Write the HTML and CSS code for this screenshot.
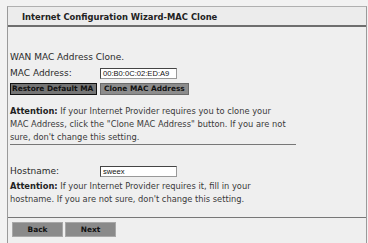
FILE: index.html
```html
<!DOCTYPE html>
<html>
<head>
<meta charset="utf-8">
<link rel="stylesheet" href="styles.css">
</head>
<body>
<div class="panel">
  <div class="header">Internet Configuration Wizard-MAC Clone</div>
  <div class="content">
    <div class="title">WAN MAC Address Clone.</div>
    <div class="row">
      <span class="label">MAC Address:</span>
      <span class="field">00:B0:0C:02:ED:A9</span>
    </div>
    <div class="btnrow">
      <span class="btn dark">Restore Default MA</span>
      <span class="btn">Clone MAC Address</span>
    </div>
    <p class="note"><span class="strong">Attention:</span> If your Internet Provider requires you to clone your MAC Address, click the "Clone MAC Address" button. If you are not sure, don't change this setting.</p>
    <div class="sep short"></div>
    <div class="row host">
      <span class="label">Hostname:</span>
      <span class="field">sweex</span>
    </div>
    <p class="note second"><span class="strong">Attention:</span> If your Internet Provider requires it, fill in your hostname. If you are not sure, don't change this setting.</p>
  </div>
  <div class="sep full"></div>
  <div class="nav">
    <span class="navbtn">Back</span>
    <span class="navbtn">Next</span>
  </div>
</div>
</body>
</html>
```
FILE: styles.css
```css
html, body {
  margin: 0;
  padding: 0;
  background: #f2f2f2;
}
body {
  width: 368px;
  height: 243px;
  overflow: hidden;
  font-family: "DejaVu Sans", Verdana, sans-serif;
  color: #222;
}
.panel {
  margin: 6px 1px 0 7px;
  border-left: 1px solid #9a9a9a;
  border-right: 1px solid #9a9a9a;
  border-top: 1px solid #b0b0b0;
  height: 236px;
  background: #efefef;
}
.header {
  height: 18px;
  border-bottom: 2px solid #6e6e6e;
  font-weight: bold;
  font-size: 8.4px;
  line-height: 20px;
  padding-left: 14px;
  color: #222;
  background: #ececec;
}
.content {
  padding: 0 0 0 2px;
}
.title {
  margin-top: 24px;
  font-size: 9px;
  line-height: 13px;
  color: #2a2a2a;
}
.row {
  display: flex;
  align-items: center;
  height: 12px;
  margin-top: 3px;
}
.label {
  font-size: 9px;
  width: 90px;
  color: #2a2a2a;
}
.field {
  box-sizing: border-box;
  width: 77px;
  height: 11px;
  border: 1px solid #444;
  border-right-color: #999;
  border-bottom-color: #999;
  background: #fff;
  font-family: "Liberation Sans", Arial, sans-serif;
  font-size: 7.6px;
  line-height: 9px;
  padding-left: 2px;
  color: #111;
  white-space: nowrap;
  overflow: hidden;
}
.btnrow {
  display: flex;
  gap: 3px;
  margin-top: 4px;
  height: 12px;
}
.btn {
  box-sizing: border-box;
  height: 12px;
  background: #8c8c8c;
  border: 1px solid #6a6a6a;
  font-family: "DejaVu Sans", Verdana, sans-serif;
  font-weight: bold;
  font-size: 7.4px;
  line-height: 10px;
  padding: 0 3px;
  color: #111;
  white-space: nowrap;
}
.btn.dark {
  width: 87px;
  background: #747474;
  border: 1px solid #111;
  padding: 0 1px;
}
.note {
  margin: 10px 0 0 0;
  width: 280px;
  font-size: 8.3px;
  line-height: 13px;
  color: #3a3a3a;
}
.strong {
  font-weight: bold;
  color: #222;
}
.note.second {
  margin-top: 3px;
}
.sep {
  height: 1px;
  background: #777;
}
.sep.short {
  width: 286px;
  margin-top: 0;
}
.host {
  margin-top: 20px;
}
.sep.full {
  margin-top: 11px;
}
.nav {
  display: flex;
  gap: 2px;
  padding: 4px 0 0 4px;
}
.navbtn {
  box-sizing: border-box;
  width: 51px;
  height: 15px;
  background: #8a8a8a;
  border: 1px solid #a8a8a8;
  text-align: center;
  font-family: "DejaVu Sans", Verdana, sans-serif;
  font-weight: bold;
  font-size: 7.4px;
  line-height: 13px;
  color: #111;
}
```
